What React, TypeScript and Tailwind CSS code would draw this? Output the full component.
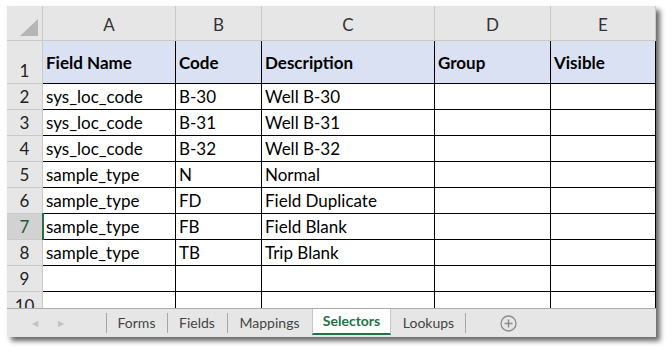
import React from "react";

const rows = [
  ["sys_loc_code", "B-30", "Well B-30"],
  ["sys_loc_code", "B-31", "Well B-31"],
  ["sys_loc_code", "B-32", "Well B-32"],
  ["sample_type", "N", "Normal"],
  ["sample_type", "FD", "Field Duplicate"],
  ["sample_type", "FB", "Field Blank"],
  ["sample_type", "TB", "Trip Blank"],
  ["", "", ""],
];

const widths = ["w-[133px]", "w-[86px]", "w-[173px]", "w-[116px]", "w-[105px]"];
const letters = ["A", "B", "C", "D", "E"];
const headers = ["Field Name", "Code", "Description", "Group", "Visible"];

const tabs = [
  { name: "Forms", w: "w-[61px]" },
  { name: "Fields", w: "w-[60px]" },
  { name: "Mappings", w: "w-[85px]" },
  { name: "Selectors", w: "w-[79px]", active: true },
  { name: "Lookups", w: "w-[75px]" },
];

function RowHead({ n, h, selected }: { n: string; h: string; selected?: boolean }) {
  return (
    <div
      className={`${h} w-[36px] shrink-0 flex items-center justify-center border-r border-b border-[#c9c9c9] ${
        selected ? "bg-[#d2d2d2] text-[#1d5c38]" : "bg-[#e6e6e6] text-[#222]"
      }`}
    >
      {n}
    </div>
  );
}

export default function App() {
  return (
    <div className="w-[672px] h-[353px] bg-white font-['Lato',sans-serif] relative">
      <div className="absolute left-[7px] top-[6px] w-[649px] flex flex-col bg-white shadow-[4px_4px_5px_rgba(0,0,0,0.6)] text-[17px] leading-none">
        {/* column letters */}
        <div className="flex h-[35px]">
          <div className="w-[36px] shrink-0 border-r border-b border-[#c9c9c9] bg-[#e6e6e6] flex items-end justify-end p-[4px]">
            <svg width="18" height="17" viewBox="0 0 18 17">
              <polygon points="0,17 18,0 18,17" fill="#b5b5b5" />
            </svg>
          </div>
          {letters.map((l, i) => (
            <div
              key={l}
              className={`${widths[i]} shrink-0 border-r border-b border-[#c9c9c9] bg-[#e6e6e6] flex items-center justify-center text-[#333] pt-[3px]`}
            >
              {l}
            </div>
          ))}
        </div>

        {/* header row */}
        <div className="flex h-[43px]">
          <div className="h-[43px] w-[36px] shrink-0 flex items-end justify-center pb-[4px] border-r border-b border-[#c9c9c9] bg-[#e6e6e6] text-[#222]">
            1
          </div>
          {headers.map((t, i) => (
            <div
              key={t}
              className={`${widths[i]} shrink-0 border-r border-b border-black bg-[#d9e1f2] flex items-center pl-[3px] font-bold text-black`}
            >
              {t}
            </div>
          ))}
        </div>

        {rows.map((r, ri) => (
          <div key={ri} className="flex h-[26px] relative">
            <RowHead n={String(ri + 2)} h="h-[26px]" selected={ri === 5} />
            {widths.map((w, ci) => (
              <div key={ci} className={`${w} shrink-0 border-r border-b border-black flex items-center pl-[3px] text-black`}>
                {r[ci] ?? ""}
              </div>
            ))}
            {ri === 5 && <div className="absolute left-[35px] top-[-1px] w-[2px] h-[27px] bg-[#217346]" />}
          </div>
        ))}

        {/* partial row 10 */}
        <div className="flex h-[16px] overflow-hidden">
          <div className="w-[36px] shrink-0 border-r border-[#c9c9c9] bg-[#e6e6e6] h-[16px] overflow-hidden">
            <div className="h-[26px] flex items-center justify-center text-[#222]">10</div>
          </div>
          {widths.map((w, ci) => (
            <div key={ci} className={`${w} shrink-0 border-r border-black`} />
          ))}
        </div>

        {/* sheet tabs */}
        <div className="h-[29px] flex items-stretch border-t border-[#ababab] bg-[#e6e6e6] text-[14px] text-[#444]">
          <div className="w-[99px] shrink-0 flex items-center text-[#c2c2c2] text-[8px]">
            <span className="ml-[25px]">◀</span>
            <span className="ml-[20px]">▶</span>
          </div>
          {tabs.map((t, i) =>
            t.active ? (
              <div
                key={t.name}
                className={`${t.w} shrink-0 bg-white border-x border-[#c6c6c6] border-b-2 border-b-[#217346] mb-[2px] flex items-center justify-center font-bold text-[#217346]`}
              >
                {t.name}
              </div>
            ) : (
              <div key={t.name} className={`${t.w} shrink-0 flex items-center justify-center relative`}>
                {i !== 3 && tabs[i - 1]?.active !== true && (
                  <span className="absolute left-0 top-[4px] h-[20px] w-px bg-[#a6a6a6]" />
                )}
                {i === tabs.length - 1 && <span className="absolute right-0 top-[4px] h-[20px] w-px bg-[#a6a6a6]" />}
                <span className="pb-[1px]">{t.name}</span>
              </div>
            )
          )}
          <div className="flex items-center pl-[34px]">
            <svg width="17" height="17" viewBox="0 0 17 17">
              <circle cx="8.5" cy="8.5" r="7.5" fill="none" stroke="#8c8c8c" strokeWidth="1.3" />
              <path d="M8.5 4.5v8M4.5 8.5h8" stroke="#8c8c8c" strokeWidth="1.5" />
            </svg>
          </div>
        </div>
      </div>
    </div>
  );
}
